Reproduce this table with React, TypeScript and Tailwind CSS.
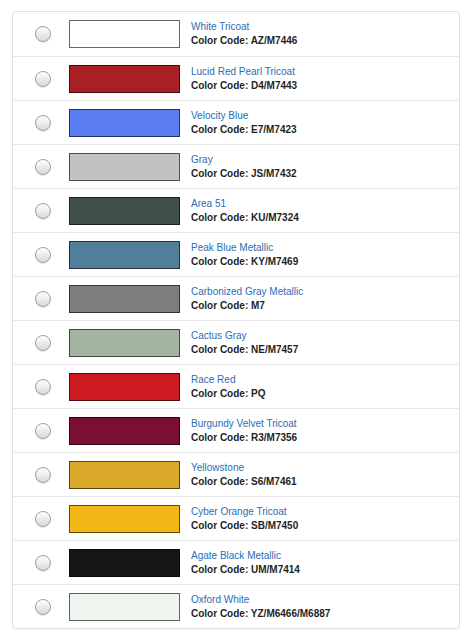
const colors = [
  { name: "White Tricoat", code: "AZ/M7446", hex: "#ffffff" },
  { name: "Lucid Red Pearl Tricoat", code: "D4/M7443", hex: "#a81f24" },
  { name: "Velocity Blue", code: "E7/M7423", hex: "#5a7ef2" },
  { name: "Gray", code: "JS/M7432", hex: "#c2c2c2" },
  { name: "Area 51", code: "KU/M7324", hex: "#3f4f4c" },
  { name: "Peak Blue Metallic", code: "KY/M7469", hex: "#507e9b" },
  { name: "Carbonized Gray Metallic", code: "M7", hex: "#7d7d7d" },
  { name: "Cactus Gray", code: "NE/M7457", hex: "#a5b4a2" },
  { name: "Race Red", code: "PQ", hex: "#cd1a21" },
  { name: "Burgundy Velvet Tricoat", code: "R3/M7356", hex: "#7b0f33" },
  { name: "Yellowstone", code: "S6/M7461", hex: "#daa92a" },
  { name: "Cyber Orange Tricoat", code: "SB/M7450", hex: "#f3b716" },
  { name: "Agate Black Metallic", code: "UM/M7414", hex: "#161616" },
  { name: "Oxford White", code: "YZ/M6466/M6887", hex: "#eef5ee" },
]

function Radio() {
  return (
    <span className="block w-4 h-4 shrink-0 rounded-full border border-[#9c9c9c] bg-gradient-to-b from-[#ffffff] to-[#d8d8d8] shadow-[inset_0_1px_1px_rgba(255,255,255,0.9),0_1px_1px_rgba(0,0,0,0.08)]" />
  )
}

export default function App() {
  return (
    <div className="w-[474px] h-[638px] bg-white pt-[11px] font-['Liberation_Sans',Arial,sans-serif]">
      <div className="ml-[12px] w-[448px] border border-[#e2e2e2] rounded-[3px] shadow-[0_1px_1px_rgba(0,0,0,0.04)]">
        {colors.map((c, i) => (
          <div
            key={c.code}
            className={`flex items-center h-[44px] pl-[22px] ${i > 0 ? "border-t border-[#e6e6e6]" : ""}`}
          >
            <Radio />
            <div
              className="ml-[18px] w-[111px] h-[28px] shrink-0 border border-black/60"
              style={{ backgroundColor: c.hex }}
            />
            <div className="ml-[11px] text-[10px] leading-[14px]">
              <div className="text-[#2b6db4]">{c.name}</div>
              <div className="font-bold text-[#1f1f1f]">Color Code: {c.code}</div>
            </div>
          </div>
        ))}
      </div>
    </div>
  )
}
